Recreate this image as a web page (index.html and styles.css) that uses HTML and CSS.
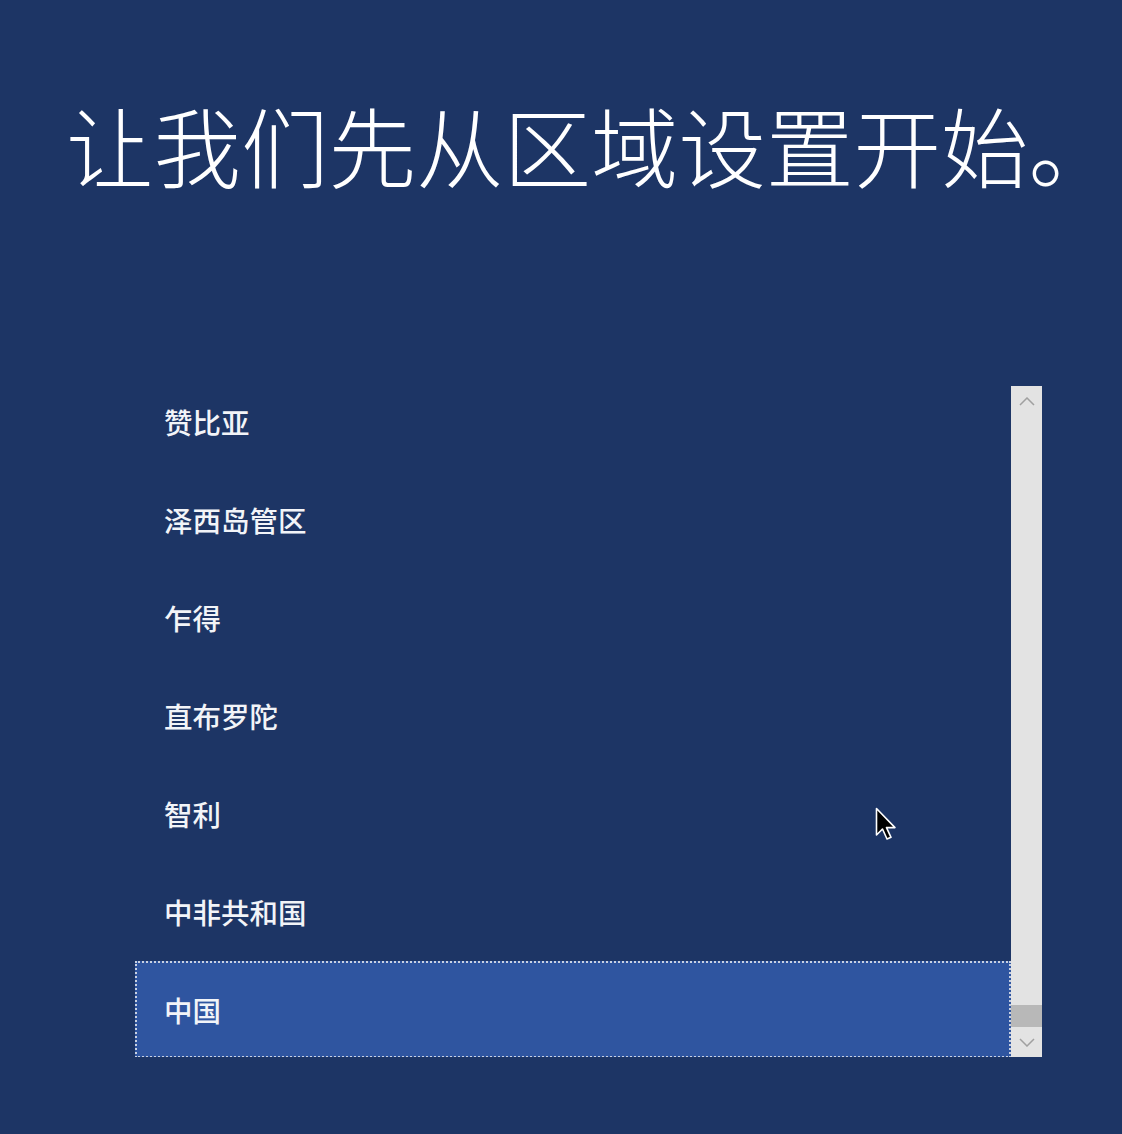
FILE: index.html
```html
<!DOCTYPE html>
<html lang="zh-CN">
<head>
    <meta charset="UTF-8">
    <title>区域设置</title>
    <link rel="stylesheet" href="styles.css">
</head>
<body>
    <div id="page">
        <h1 class="title">让我们先从区域设置开始。</h1>
        <div class="region">
            <div class="list">
                <ul>
                    <li>赞比亚</li>
                    <li>泽西岛管区</li>
                    <li>乍得</li>
                    <li>直布罗陀</li>
                    <li>智利</li>
                    <li>中非共和国</li>
                    <li class="selected">中国</li>
                </ul>
            </div>
            <div class="scrollbar">
                <span class="arrow up">
                    <svg width="16" height="9" viewBox="0 0 16 9"><path d="M1 8 L8 1 L15 8" fill="none" stroke="#a0a0a0" stroke-width="1.5"/></svg>
                </span>
                <span class="track"></span>
                <span class="thumb"></span>
                <span class="arrow down">
                    <svg width="16" height="9" viewBox="0 0 16 9"><path d="M1 1 L8 8 L15 1" fill="none" stroke="#a0a0a0" stroke-width="1.5"/></svg>
                </span>
            </div>
        </div>
        <svg class="cursor" width="24" height="38" viewBox="0 0 24 38">
            <path d="M1.5 1.5 L1.5 28 L7.5 22 L12 32 L16 30.3 L11.5 20.6 L20 20.6 Z" fill="#000" stroke="#fff" stroke-width="1.6" stroke-linejoin="round"/>
        </svg>
    </div>
</body>
</html>
```

FILE: styles.css
```css
*{
    padding: 0;
    margin: 0;
}
ul{
    list-style: none;
}
body{
    background: #1d3565;
    color: #fff;
    font-family: "Noto Sans CJK SC", "Noto Sans", sans-serif;
}
#page{
    position: relative;
    width: 1122px;
    height: 1134px;
    overflow: hidden;
}
.title{
    padding: 88px 0 0 66px;
    font-size: 87.5px;
    font-weight: 300;
    line-height: 112px;
    white-space: nowrap;
}
.region{
    display: flex;
    margin: 186px 0 0 135px;
    width: 907px;
    height: 671px;
}
.list{
    width: 876px;
    height: 671px;
    overflow: hidden;
}
.list ul{
    margin-top: -13px;
}
.list li{
    height: 98px;
    line-height: 96px;
    padding-left: 28px;
    font-size: 28.5px;
    font-weight: 500;
    color: #f2f4f8;
    border: 1px solid transparent;
    box-sizing: border-box;
}
.list li.selected{
    background: #2f55a0;
    border: 2px dotted #c9d1e2;
    padding-left: 27px;
    line-height: 94px;
    height: 97px;
}
.scrollbar{
    width: 31px;
    height: 671px;
    background: #e3e3e3;
    display: flex;
    flex-direction: column;
}
.scrollbar .arrow{
    height: 30px;
    display: flex;
    align-items: center;
    justify-content: center;
}
.scrollbar .track{
    flex: 1;
}
.scrollbar .thumb{
    height: 22px;
    background: #b8b8b8;
}
.cursor{
    position: absolute;
    left: 875px;
    top: 807px;
}
```
